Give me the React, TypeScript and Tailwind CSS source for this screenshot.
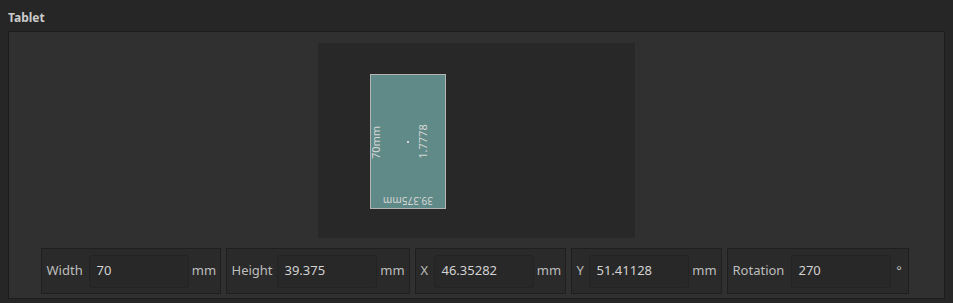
import React from "react";

const font = { fontFamily: '"Noto Sans", "Open Sans", sans-serif' };

interface FieldProps {
  label: string;
  value: string;
  unit: string;
  width: string;
  labelWidth: string;
}

function Field({ label, value, unit, width, labelWidth }: FieldProps) {
  return (
    <div className={`flex h-[46px] items-center border border-[#1f1f1f] bg-[#2a2a2a] pl-[5px] ${width}`}>
      <span className={`mr-[7px] whitespace-nowrap text-[13px] text-[#bdbdbd] ${labelWidth}`}>{label}</span>
      <div className="flex h-[33px] w-[100px] shrink-0 items-center rounded-[3px] border border-[#232323] bg-[#282828] px-[7px] text-[13px] text-[#d2d2d2]">
        {value}
      </div>
      <span className="flex-1 text-center text-[13px] text-[#bdbdbd]">{unit}</span>
    </div>
  );
}

export default function App() {
  return (
    <div className="h-[303px] w-[953px] overflow-hidden bg-[#262626]" style={font}>
      <div className="px-2 pt-[9px] text-[12px] font-bold text-[#cccccc]">Tablet</div>
      <div className="mx-2 mt-[4px] flex h-[268px] w-[937px] flex-col items-center border border-[#1c1c1c] bg-[#303030] pt-[11px]">
        {/* preview canvas */}
        <div className="relative h-[195px] w-[317px] bg-[#282828]">
          <div className="absolute left-[52px] top-[31px] h-[135px] w-[76px] border border-[#b4b4b4] bg-[#5f8a87]">
            <span className="absolute left-[-19px] top-[61px] w-[46px] -rotate-90 text-center text-[11px] leading-[13px] text-[#d6d6d6]">
              70mm
            </span>
            <span className="absolute left-[28px] top-[60px] w-[46px] -rotate-90 text-center text-[11px] leading-[13px] text-[#d6d6d6]">
              1.7778
            </span>
            <span className="absolute left-[36px] top-[66px] h-[2px] w-[2px] bg-[#d6d6d6]" />
            <span className="absolute bottom-[1px] left-0 w-full rotate-180 text-center text-[10px] leading-[12px] text-[#d6d6d6]">
              39.375mm
            </span>
          </div>
        </div>
        {/* fields */}
        <div className="mr-[4px] mt-[10px] flex gap-[5px]">
          <Field label="Width" value="70" unit="mm" width="w-[180px]" labelWidth="w-[35px]" />
          <Field label="Height" value="39.375" unit="mm" width="w-[184px]" labelWidth="w-[38px]" />
          <Field label="X" value="46.35282" unit="mm" width="w-[151px]" labelWidth="w-[6px]" />
          <Field label="Y" value="51.41128" unit="mm" width="w-[151px]" labelWidth="w-[5px]" />
          <Field label="Rotation" value="270" unit="°" width="w-[182px]" labelWidth="w-[51px]" />
        </div>
      </div>
    </div>
  );
}
